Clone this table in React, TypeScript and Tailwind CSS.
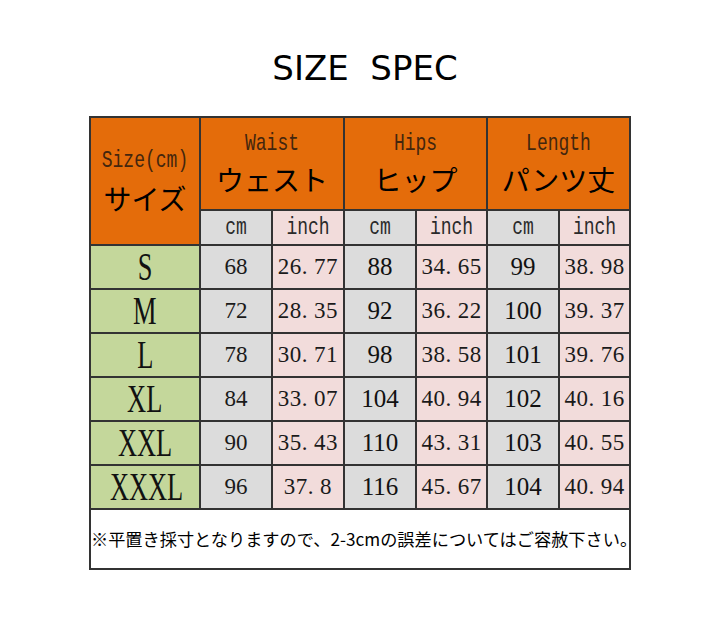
const rows = [
  { size: "S", waist: ["68", "26.77"], hips: ["88", "34.65"], length: ["99", "38.98"] },
  { size: "M", waist: ["72", "28.35"], hips: ["92", "36.22"], length: ["100", "39.37"] },
  { size: "L", waist: ["78", "30.71"], hips: ["98", "38.58"], length: ["101", "39.76"] },
  { size: "XL", waist: ["84", "33.07"], hips: ["104", "40.94"], length: ["102", "40.16"] },
  { size: "XXL", waist: ["90", "35.43"], hips: ["110", "43.31"], length: ["103", "40.55"] },
  { size: "XXXL", waist: ["96", "37.8"], hips: ["116", "45.67"], length: ["104", "40.94"] },
];

const groups = [
  { en: "Waist", ja: "ウェスト" },
  { en: "Hips", ja: "ヒップ" },
  { en: "Length", ja: "パンツ丈" },
];

const border = "border-2 border-[#333333]";

// tall narrow mono label, like the SimSun text in the original sheet
function Mono({ children, className = "" }: { children: React.ReactNode; className?: string }) {
  return (
    <span className={`inline-block scale-y-[1.3] font-['Liberation_Mono',monospace] text-[18px] leading-[24px] ${className}`}>
      {children}
    </span>
  );
}

// decimal with the wide gap after the point
function Inch({ value }: { value: string }) {
  const [a, b] = value.split(".");
  return (
    <span className="tracking-[0.5px]">
      {a}
      <span className="mr-[6px]">.</span>
      {b}
    </span>
  );
}

function GroupHeader({ en, ja }: { en: string; ja: string }) {
  return (
    <th colSpan={2} className={`${border} bg-[#E46C0A] p-0 font-normal`}>
      <div className="flex flex-col items-center gap-[7px]">
        <Mono className="text-[#43260e]">{en}</Mono>
        <span className="font-['Noto_Sans_CJK_JP',sans-serif] text-[28px] leading-[34px] text-black">{ja}</span>
      </div>
    </th>
  );
}

export default function App() {
  return (
    <div className="w-[720px] h-[618px] bg-white">
      <div className="h-[116px] pt-[51px] pl-[10px] text-center">
        <h1 className="font-['DejaVu_Sans',sans-serif] text-[34px] leading-[34px] text-black whitespace-pre">SIZE  SPEC</h1>
      </div>

      <table className="mx-auto w-[540px] table-fixed border-collapse text-[#1a1a1a]">
        <colgroup>
          <col className="w-[110px]" />
          <col className="w-[72px]" />
          <col className="w-[72px]" />
          <col className="w-[72px]" />
          <col className="w-[71px]" />
          <col className="w-[72px]" />
          <col className="w-[71px]" />
        </colgroup>
        <thead>
          <tr className="h-[93px]">
            <th rowSpan={2} className={`${border} bg-[#E46C0A] p-0 font-normal`}>
              <div className="flex flex-col items-center gap-[8px] pt-[2px]">
                <Mono className="text-[#43260e]">Size(cm)</Mono>
                <span className="font-['Noto_Sans_CJK_JP',sans-serif] text-[28px] leading-[34px] text-black">サイズ</span>
              </div>
            </th>
            {groups.map((g) => (
              <GroupHeader key={g.en} en={g.en} ja={g.ja} />
            ))}
          </tr>
          <tr className="h-[35px]">
            {groups.map((g) => [
              <th key={g.en + "cm"} className={`${border} bg-[#DCDCDC] p-0 font-normal`}>
                <Mono className="text-[#2a2a2a]">cm</Mono>
              </th>,
              <th key={g.en + "in"} className={`${border} bg-[#F2DCDB] p-0 font-normal`}>
                <Mono className="text-[#2a2a2a]">inch</Mono>
              </th>,
            ])}
          </tr>
        </thead>
        <tbody>
          {rows.map((r) => (
            <tr key={r.size} className="h-[44px]">
              <td className={`${border} bg-[#C4D79B] p-0 text-center`}>
                <span className="inline-block scale-x-[0.66] font-['Liberation_Serif',serif] text-[40px] leading-[40px] text-[#111]">{r.size}</span>
              </td>
              <td className={`${border} bg-[#DCDCDC] p-0 text-center font-['Liberation_Serif',serif] text-[23px] text-[#1a1a1a]`}>{r.waist[0]}</td>
              <td className={`${border} bg-[#F2DCDB] p-0 text-center font-['Liberation_Serif',serif] text-[23px] text-[#1a1a1a]`}>
                <Inch value={r.waist[1]} />
              </td>
              <td className={`${border} bg-[#DCDCDC] p-0 text-center font-['Liberation_Serif',serif] text-[25px] text-[#111]`}>{r.hips[0]}</td>
              <td className={`${border} bg-[#F2DCDB] p-0 text-center font-['Liberation_Serif',serif] text-[23px] text-[#1a1a1a]`}>
                <Inch value={r.hips[1]} />
              </td>
              <td className={`${border} bg-[#DCDCDC] p-0 text-center font-['Liberation_Serif',serif] text-[25px] text-[#111]`}>{r.length[0]}</td>
              <td className={`${border} bg-[#F2DCDB] p-0 text-center font-['Liberation_Serif',serif] text-[23px] text-[#1a1a1a]`}>
                <Inch value={r.length[1]} />
              </td>
            </tr>
          ))}
          <tr className="h-[60px]">
            <td colSpan={7} className={`${border} bg-white p-0`}>
              <p className="whitespace-nowrap font-['Noto_Sans_CJK_JP',sans-serif] text-[17.2px] leading-[24px] text-black">
                ※平置き採寸となりますので、2-3cmの誤差についてはご容赦下さい。
              </p>
            </td>
          </tr>
        </tbody>
      </table>
    </div>
  );
}
